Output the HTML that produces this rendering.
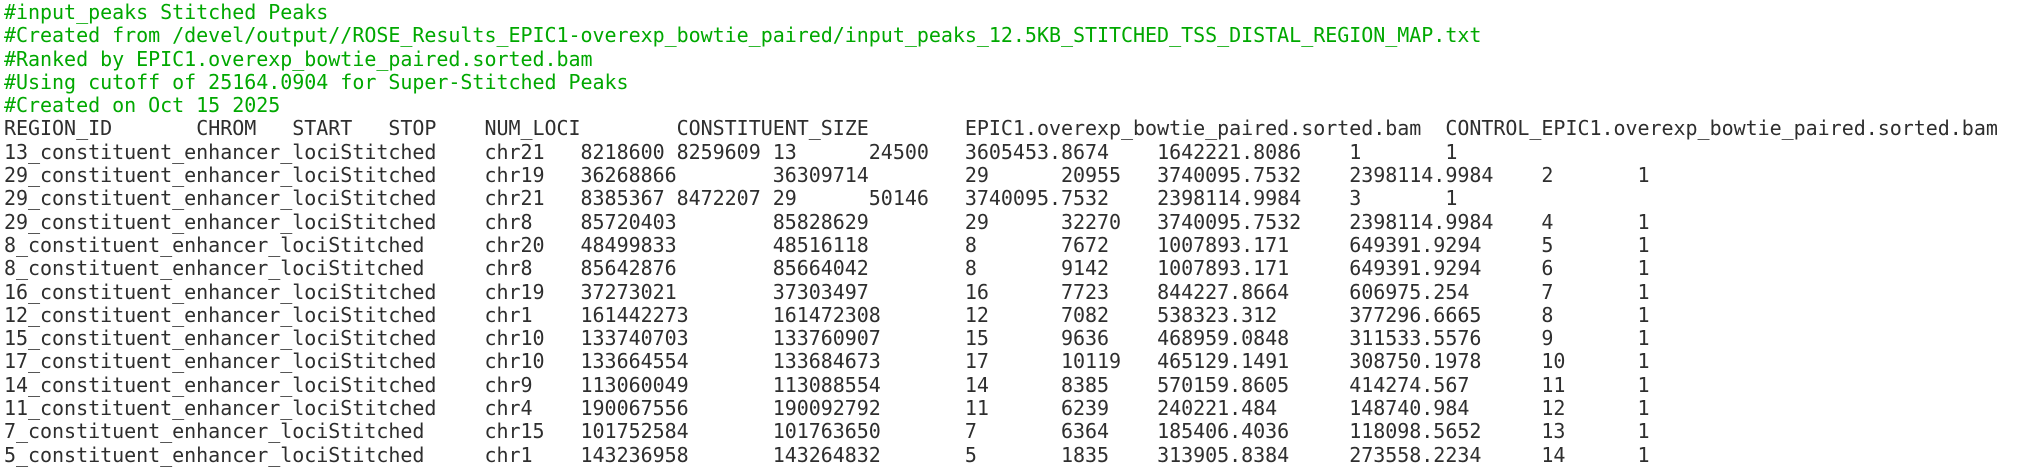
<!DOCTYPE html>
<html><head><meta charset="utf-8"><style>
html,body{margin:0;padding:0;background:#fff;width:2017px;height:476px;overflow:hidden}
pre{margin:0;padding:1px 0 0 4px;font-family:"DejaVu Sans Mono","Liberation Mono",monospace;font-size:20px;letter-spacing:-0.03px;line-height:23.3px;color:#2e2e2e;tab-size:8;-moz-tab-size:8;white-space:pre}
.c{color:#00a800}
</style></head><body><pre><span class="c">#input_peaks Stitched Peaks
#Created from /devel/output//ROSE_Results_EPIC1-overexp_bowtie_paired/input_peaks_12.5KB_STITCHED_TSS_DISTAL_REGION_MAP.txt
#Ranked by EPIC1.overexp_bowtie_paired.sorted.bam
#Using cutoff of 25164.0904 for Super-Stitched Peaks
#Created on Oct 15 2025</span>
REGION_ID	CHROM	START	STOP	NUM_LOCI	CONSTITUENT_SIZE	EPIC1.overexp_bowtie_paired.sorted.bam	CONTROL_EPIC1.overexp_bowtie_paired.sorted.bam
13_constituent_enhancer_lociStitched	chr21	8218600	8259609	13	24500	3605453.8674	1642221.8086	1	1
29_constituent_enhancer_lociStitched	chr19	36268866	36309714	29	20955	3740095.7532	2398114.9984	2	1
29_constituent_enhancer_lociStitched	chr21	8385367	8472207	29	50146	3740095.7532	2398114.9984	3	1
29_constituent_enhancer_lociStitched	chr8	85720403	85828629	29	32270	3740095.7532	2398114.9984	4	1
8_constituent_enhancer_lociStitched	chr20	48499833	48516118	8	7672	1007893.171	649391.9294	5	1
8_constituent_enhancer_lociStitched	chr8	85642876	85664042	8	9142	1007893.171	649391.9294	6	1
16_constituent_enhancer_lociStitched	chr19	37273021	37303497	16	7723	844227.8664	606975.254	7	1
12_constituent_enhancer_lociStitched	chr1	161442273	161472308	12	7082	538323.312	377296.6665	8	1
15_constituent_enhancer_lociStitched	chr10	133740703	133760907	15	9636	468959.0848	311533.5576	9	1
17_constituent_enhancer_lociStitched	chr10	133664554	133684673	17	10119	465129.1491	308750.1978	10	1
14_constituent_enhancer_lociStitched	chr9	113060049	113088554	14	8385	570159.8605	414274.567	11	1
11_constituent_enhancer_lociStitched	chr4	190067556	190092792	11	6239	240221.484	148740.984	12	1
7_constituent_enhancer_lociStitched	chr15	101752584	101763650	7	6364	185406.4036	118098.5652	13	1
5_constituent_enhancer_lociStitched	chr1	143236958	143264832	5	1835	313905.8384	273558.2234	14	1</pre></body></html>
